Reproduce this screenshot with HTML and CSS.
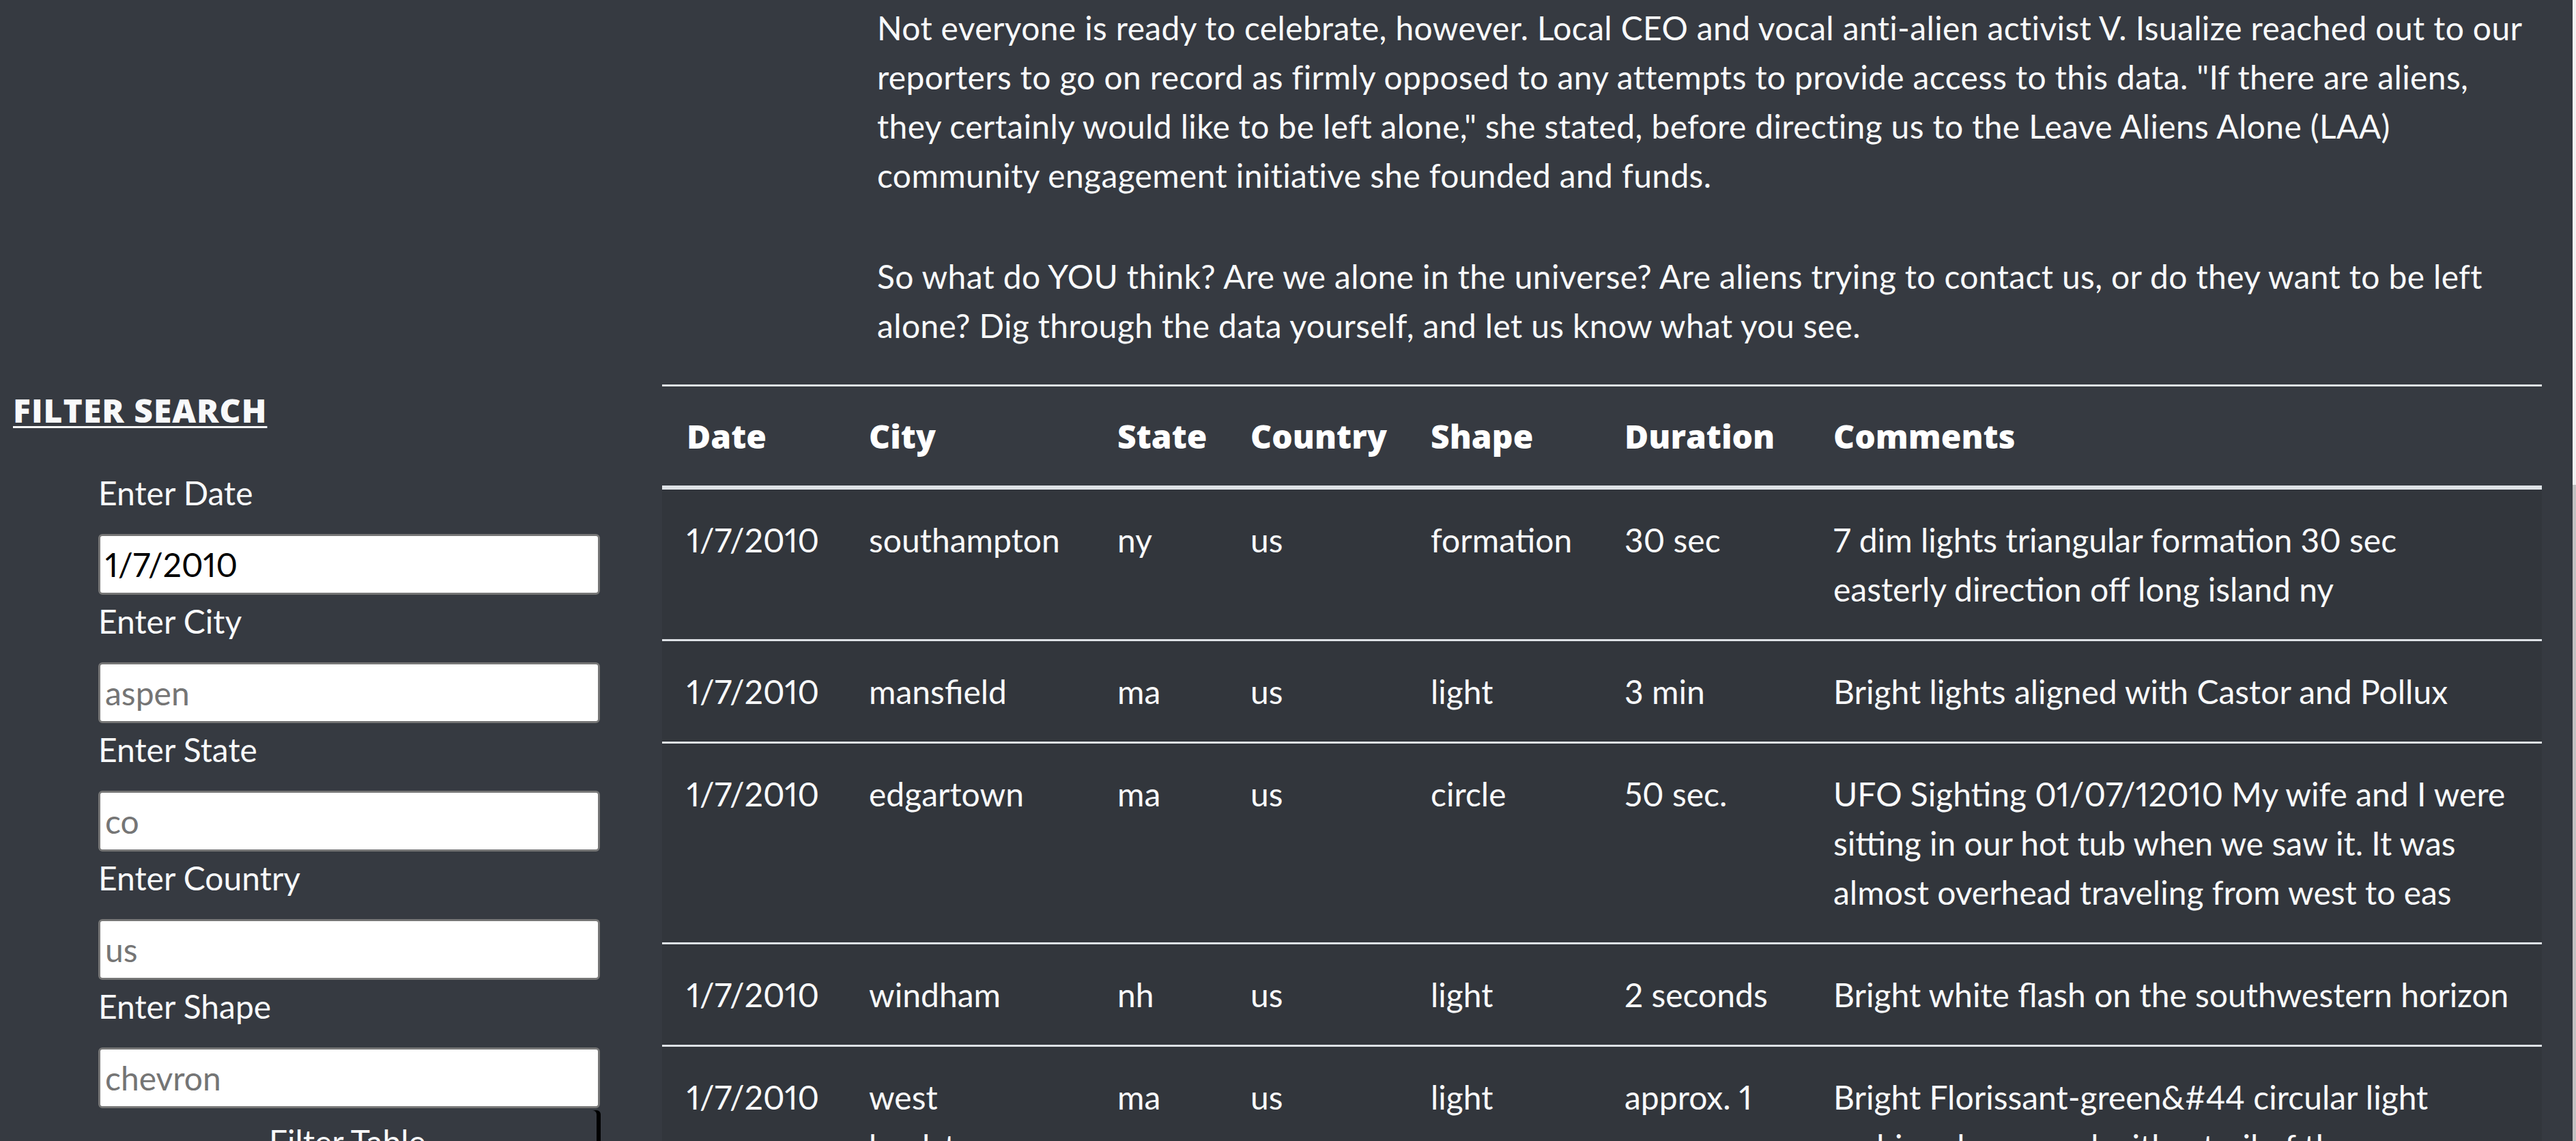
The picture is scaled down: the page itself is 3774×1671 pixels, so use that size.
FILE: index.html
```html
<!DOCTYPE html>
<html lang="en">
<head>
<meta charset="utf-8">
<title>UFO Sightings</title>
<link rel="stylesheet" href="styles.css">
</head>
<body>
<div class="story">
  <p>Not everyone is ready to celebrate, however. Local CEO and vocal anti-alien activist V. Isualize reached out to our reporters to go on record as firmly opposed to any attempts to provide access to this data. "If there are aliens, they certainly would like to be left alone," she stated, before directing us to the Leave Aliens Alone (LAA) community engagement initiative she founded and funds.</p>
  <p>So what do YOU think? Are we alone in the universe? Are aliens trying to contact us, or do they want to be left alone? Dig through the data yourself, and let us know what you see.</p>
</div>

<div class="data">
  <aside class="filters">
    <h2 class="filters-title">FILTER SEARCH</h2>
    <form class="filter-form">
      <label for="datetime">Enter Date</label>
      <input id="datetime" type="text" value="1/7/2010" placeholder="1/11/2011">
      <label for="city">Enter City</label>
      <input id="city" type="text" placeholder="aspen">
      <label for="state">Enter State</label>
      <input id="state" type="text" placeholder="co">
      <label for="country">Enter Country</label>
      <input id="country" type="text" placeholder="us">
      <label for="shape">Enter Shape</label>
      <input id="shape" type="text" placeholder="chevron">
      <button class="filter-btn" type="button">Filter Table</button>
    </form>
  </aside>

  <table class="ufo">
    <colgroup>
      <col class="c-date"><col class="c-city"><col class="c-state"><col class="c-country"><col class="c-shape"><col class="c-duration"><col class="c-comments">
    </colgroup>
    <thead>
      <tr><th>Date</th><th>City</th><th>State</th><th>Country</th><th>Shape</th><th>Duration</th><th>Comments</th></tr>
    </thead>
    <tbody>
      <tr><td>1/7/2010</td><td class="city">southampton</td><td>ny</td><td>us</td><td>formation</td><td>30 sec</td><td class="comments">7 dim lights triangular formation 30 sec easterly direction off long island ny</td></tr>
      <tr><td>1/7/2010</td><td class="city">mansfield</td><td>ma</td><td>us</td><td>light</td><td>3 min</td><td class="comments">Bright lights aligned with Castor and Pollux</td></tr>
      <tr><td>1/7/2010</td><td class="city">edgartown</td><td>ma</td><td>us</td><td>circle</td><td>50 sec.</td><td class="comments">UFO Sighting 01/07/12010 My wife and I were sitting in our hot tub when we saw it. It was almost overhead traveling from west to eas</td></tr>
      <tr><td>1/7/2010</td><td class="city">windham</td><td>nh</td><td>us</td><td>light</td><td>2 seconds</td><td class="comments">Bright white flash on the southwestern horizon</td></tr>
      <tr><td>1/7/2010</td><td class="city">west boylston</td><td>ma</td><td>us</td><td>light</td><td>approx. 1 sec</td><td class="comments">Bright Florissant-green&amp;#44 circular light arching downward with a trail of the same color</td></tr>
    </tbody>
  </table>
</div>

<div class="scrollbar"><div class="scrollbar-thumb"></div></div>
</body>
</html>
```
FILE: styles.css
```css
html, body {
  margin: 0;
  background: #363a41;
  overflow: hidden;
}

body {
  font-family: Lato, "Liberation Sans", sans-serif;
  font-size: 48px;
  line-height: 72px;
  font-variant-numeric: proportional-nums;
  color: #f8f9fa;
}

/* article text */
.story {
  padding: 5px 0 0 1285px;
  width: 2418px;
}

.story p {
  margin: 0 0 76px;
  letter-spacing: 0.35px;
}

.story p:last-child {
  margin-bottom: 50px;
}

/* filter + table row */
.data {
  display: flex;
  align-items: flex-start;
}

.filters {
  flex: 0 0 970px;
}

.filters-title {
  margin: 9px 0 0 19px;
  font-family: "Open Sans", "Liberation Sans", sans-serif;
  font-weight: 800;
  font-size: 48px;
  line-height: 57.6px;
  letter-spacing: 1px;
  color: #f8f9fa;
  text-decoration: underline;
  text-decoration-thickness: 3px;
  text-underline-offset: 5px;
}

.filter-form {
  display: flex;
  flex-direction: column;
  align-items: flex-start;
  margin: 56.4px 0 0 144px;
  width: 735px;
}

.filter-form label {
  display: block;
  line-height: 72px;
  margin-bottom: 24px;
}

.filter-form input {
  box-sizing: border-box;
  width: 735px;
  height: 89px;
  margin: 0 0 3px;
  padding: 0 7px;
  border: 3px solid #767676;
  border-radius: 6px;
  background: #fff;
  color: #000;
  font-family: Lato, "Liberation Sans", sans-serif;
  font-size: 48px;
  font-variant-numeric: proportional-nums;
}

.filter-form input::placeholder {
  color: #757575;
}

.filter-btn {
  width: 730px;
  margin-top: 0;
  padding: 10px 0 20px;
  border: 0;
  border-radius: 6px;
  background: #363a41;
  box-shadow: 6px 0 0 #000;
  color: #f8f9fa;
  font-family: Lato, "Liberation Sans", sans-serif;
  font-size: 48px;
  line-height: 72px;
  text-align: center;
}

/* table */
.ufo {
  width: 2754px;
  table-layout: fixed;
  border-collapse: separate;
  border-spacing: 0;
}

.c-date { width: 267px; }
.c-city { width: 364px; }
.c-state { width: 195px; }
.c-country { width: 264px; }
.c-shape { width: 284px; }
.c-duration { width: 306px; }
.c-comments { width: 1074px; }

.ufo th {
  padding: 36.5px 36px;
  border-top: 3px solid #dee2e6;
  border-bottom: 6px solid #dee2e6;
  text-align: left;
  white-space: nowrap;
  font-family: "Open Sans", "Liberation Sans", sans-serif;
  font-weight: 800;
  font-size: 48px;
  line-height: 72px;
  color: #fff;
}

.ufo td {
  padding: 37.5px 36px;
  border-top: 3px solid #dee2e6;
  background: #32363c;
  vertical-align: top;
  text-align: left;
}

.ufo tbody tr:first-child td {
  border-top: 0;
}

.ufo td.city {
  padding-right: 62px;
}

.ufo td.comments {
  padding-right: 46px;
}

/* page scrollbar sliver at the right edge */
.scrollbar {
  position: fixed;
  top: 0;
  right: 0;
  width: 5px;
  height: 100%;
  background: #f1f1f1;
}

.scrollbar-thumb {
  position: absolute;
  top: 710px;
  left: 0;
  right: 0;
  bottom: 0;
  background: #c1c1c1;
}
```
